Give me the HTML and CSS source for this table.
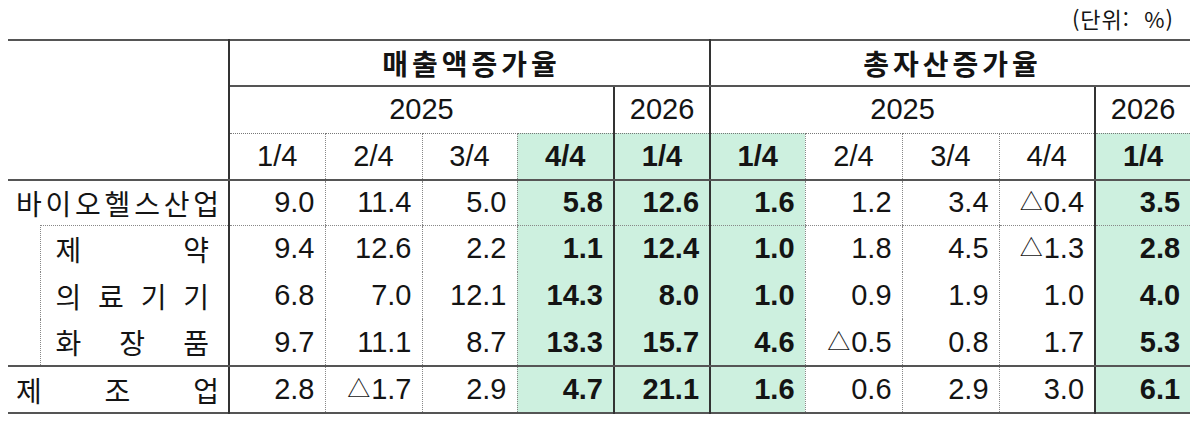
FILE: index.html
```html
<!DOCTYPE html>
<html lang="ko">
<head>
<meta charset="utf-8">
<title>증가율</title>
<link rel="stylesheet" href="styles.css">
</head>
<body>
<div class="page">
  <div class="unit">(단위:&nbsp;&nbsp;%)</div>
  <table class="t">
    <colgroup>
      <col class="w-ind"><col class="w-lab">
      <col class="w96"><col class="w97"><col class="w95"><col class="w97"><col class="w96">
      <col class="w95"><col class="w97"><col class="w97"><col class="w96"><col class="w95">
    </colgroup>
    <thead>
      <tr class="h1">
        <th class="corner" colspan="2" rowspan="3"></th>
        <th class="grp" colspan="5">매출액증가율</th>
        <th class="grp sl" colspan="5">총자산증가율</th>
      </tr>
      <tr class="h2">
        <th class="yr" colspan="4">2025</th>
        <th class="yr sl">2026</th>
        <th class="yr sl" colspan="4">2025</th>
        <th class="yr sl">2026</th>
      </tr>
      <tr class="h3">
        <th class="q">1/4</th>
        <th class="q dl">2/4</th>
        <th class="q dl">3/4</th>
        <th class="q dl g b">4/4</th>
        <th class="q sl g b">1/4</th>
        <th class="q sl g b">1/4</th>
        <th class="q dl">2/4</th>
        <th class="q dl">3/4</th>
        <th class="q dl">4/4</th>
        <th class="q sl g b">1/4</th>
      </tr>
    </thead>
    <tbody>
      <tr class="r-main">
        <th class="lab" colspan="2"><span class="dist"><span>바</span><span>이</span><span>오</span><span>헬</span><span>스</span><span>산</span><span>업</span></span></th>
        <td>9.0</td><td class="dl">11.4</td><td class="dl">5.0</td><td class="dl g b">5.8</td><td class="sl g b">12.6</td>
        <td class="sl g b">1.6</td><td class="dl">1.2</td><td class="dl">3.4</td><td class="dl"><span class="tri">△</span>0.4</td><td class="sl g b">3.5</td>
      </tr>
      <tr class="r-sub r-sub-first">
        <th class="ind" rowspan="3"></th>
        <th class="sublab"><span class="dist"><span>제</span><span>약</span></span></th>
        <td>9.4</td><td class="dl">12.6</td><td class="dl">2.2</td><td class="dl g b">1.1</td><td class="sl g b">12.4</td>
        <td class="sl g b">1.0</td><td class="dl">1.8</td><td class="dl">4.5</td><td class="dl"><span class="tri">△</span>1.3</td><td class="sl g b">2.8</td>
      </tr>
      <tr class="r-sub">
        <th class="sublab"><span class="dist"><span>의</span><span>료</span><span>기</span><span>기</span></span></th>
        <td>6.8</td><td class="dl">7.0</td><td class="dl">12.1</td><td class="dl g b">14.3</td><td class="sl g b">8.0</td>
        <td class="sl g b">1.0</td><td class="dl">0.9</td><td class="dl">1.9</td><td class="dl">1.0</td><td class="sl g b">4.0</td>
      </tr>
      <tr class="r-sub r-sub-last">
        <th class="sublab"><span class="dist"><span>화</span><span>장</span><span>품</span></span></th>
        <td>9.7</td><td class="dl">11.1</td><td class="dl">8.7</td><td class="dl g b">13.3</td><td class="sl g b">15.7</td>
        <td class="sl g b">4.6</td><td class="dl"><span class="tri">△</span>0.5</td><td class="dl">0.8</td><td class="dl">1.7</td><td class="sl g b">5.3</td>
      </tr>
      <tr class="r-mfg">
        <th class="lab" colspan="2"><span class="dist"><span>제</span><span>조</span><span>업</span></span></th>
        <td>2.8</td><td class="dl"><span class="tri">△</span>1.7</td><td class="dl">2.9</td><td class="dl g b">4.7</td><td class="sl g b">21.1</td>
        <td class="sl g b">1.6</td><td class="dl">0.6</td><td class="dl">2.9</td><td class="dl">3.0</td><td class="sl g b">6.1</td>
      </tr>
    </tbody>
  </table>
</div>
</body>
</html>
```
FILE: styles.css
```css
* { box-sizing: border-box; }
html, body { margin: 0; padding: 0; background: #fff; }
body {
  font-family: "Noto Sans CJK KR", "Liberation Sans", sans-serif;
  color: #141414;
}
.page {
  width: 1200px;
  height: 423px;
  padding: 0 10px 0 8px;
}
.unit {
  height: 39px;
  display: flex;
  justify-content: flex-end;
  align-items: center;
  padding-right: 16px;
  padding-bottom: 3px;
  font-size: 22px;
  line-height: 1;
  letter-spacing: 1px;
}
.t {
  width: 1182px;
  table-layout: fixed;
  border-collapse: collapse;
  border-top: 2px solid #555;
  border-bottom: 2px solid #555;
}
.w-ind { width: 32px; }
.w-lab { width: 189px; }
.w95 { width: 95px; }
.w96 { width: 96px; }
.w97 { width: 97px; }

.t th, .t td {
  padding: 0;
  font-weight: normal;
  vertical-align: middle;
  white-space: nowrap;
}
.t td, .t .q, .t .yr {
  font-family: "Liberation Sans", Arial, sans-serif;
  font-size: 29px;
  line-height: 1;
}
.t td { text-align: right; padding-right: 10px; }
.t .q, .t .yr { text-align: center; }

.h1 { height: 46px; }
.h2 { height: 47px; }
.h3 { height: 47px; }
.r-main { height: 45px; }
.r-sub { height: 47px; }
.r-mfg { height: 47px; }

.t .corner {
  border-right: 2px solid #333;
  border-bottom: 2px solid #555;
}
.t .grp {
  font-size: 28px;
  font-weight: bold;
  letter-spacing: 4px;
  text-indent: 4px;
  text-align: center;
  border-bottom: 2px solid #555;
  line-height: 1;
}
.h2 .yr { border-bottom: 1px dotted #777; }
.h3 th { border-bottom: 2px solid #555; }

.t .sl { border-left: 2px solid #333; }
.t .dl { border-left: 1px dotted #888; }
.t .g { background: #cdf0df; }
.t .b { font-weight: bold; }

.r-main td { border-bottom: 1px dotted #888; }
.t .lab {
  border-right: 2px solid #333;
  padding: 0 9px 0 8px;
}
.r-sub-first .sublab { border-top: 1px dotted #888; }
.t .sublab {
  border-left: 1px dotted #888;
  border-right: 2px solid #333;
  padding: 0 19px 0 15px;
}
.r-sub-last td, .t .r-sub-last .sublab, .t .ind { border-bottom: 2px solid #555; }

.dist {
  display: flex;
  justify-content: space-between;
  font-size: 28px;
  line-height: 1;
}
.t .tri {
  font-family: "Noto Sans CJK KR", "DejaVu Sans", sans-serif;
  font-size: 23px;
  font-weight: normal;
  vertical-align: 2px;
  margin-right: 1px;
}
```
